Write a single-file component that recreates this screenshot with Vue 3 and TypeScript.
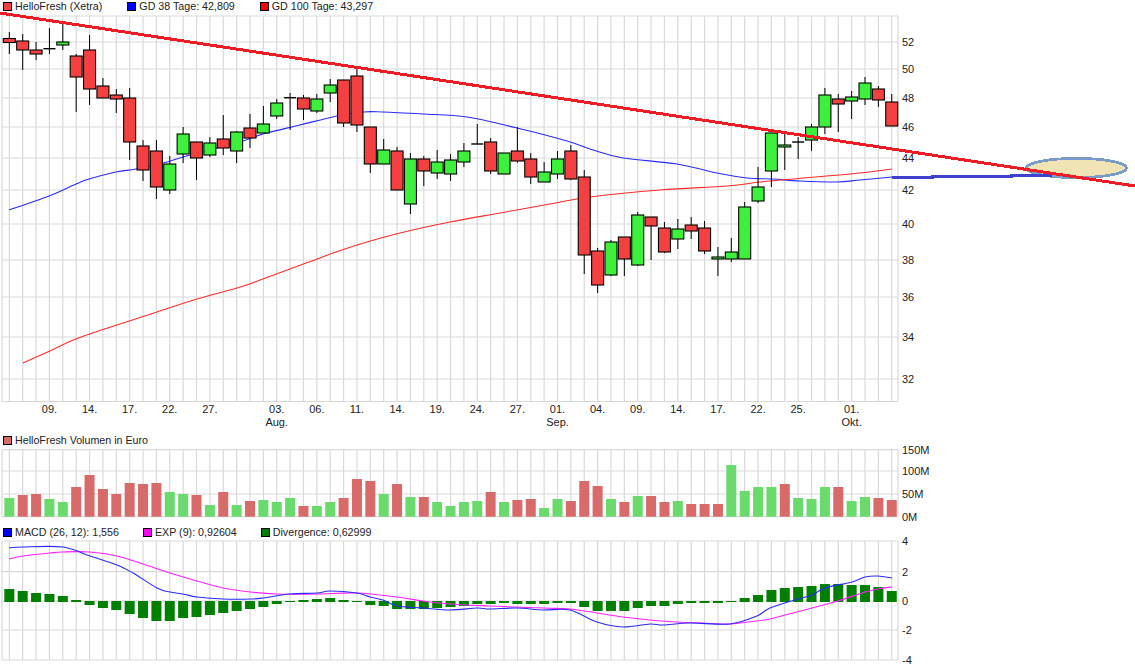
<script setup lang="ts">
// pixel data read off the chart: [bodyTop, bodyBottom, wickTop, wickBottom, up?]
type Candle = [number, number, number, number, number]

const candles: Candle[] = [
  [38.5, 42.5, 32, 54, 0], [41, 50, 34, 70, 0], [50, 54, 42, 60, 0], [48.7, 48.7, 28, 54, 2], [42, 45, 23, 50, 1],
  [56, 77, 54, 112, 0], [50, 89, 35, 105, 0], [86, 98, 78, 98, 0], [95, 99, 89, 113, 0], [98, 142, 88, 160, 0],
  [146, 170, 140, 181, 0], [151, 187, 140, 199, 0], [164, 190, 156, 194, 1], [134, 154, 127, 163, 1], [142, 158, 142, 180, 0],
  [143, 155, 137, 157, 1], [139, 148, 115, 155, 0], [132, 151, 131, 163, 1], [128, 138, 114, 148, 0], [124, 133, 106, 133, 1],
  [103, 116, 99, 119, 1], [97.7, 97.7, 93, 130, 2], [98, 109, 95, 120, 0], [99, 111, 94, 113, 1], [85, 93, 79, 102, 1],
  [80, 123, 80, 127, 0], [76, 125, 69, 132, 0], [127, 164, 127, 173, 0], [150, 164, 139, 164, 1], [151, 190, 147, 190, 0],
  [159, 204, 153, 214, 1], [159, 171, 156, 186, 0], [162, 173, 150, 179, 1], [160, 174, 154, 181, 1], [151, 162, 143, 167, 1],
  [144, 144, 124, 144, 2], [142, 171, 138, 174, 0], [153, 174, 153, 174, 1], [151, 161, 127, 163, 0], [159, 177, 153, 184, 0],
  [172, 182, 162, 182, 1], [159, 174, 151, 179, 1], [151, 179, 145, 180, 0], [177, 255, 170, 274, 0], [251, 285, 248, 293, 0],
  [242, 275, 240, 276, 1], [237, 259, 237, 276, 0], [215, 265, 212, 266, 1], [217, 226, 217, 260, 0], [228, 252, 222, 253, 0],
  [229, 239, 219, 249, 1], [225, 231, 217, 239, 0], [228, 251, 221, 254, 0], [257, 259, 247, 276, 1], [252, 259, 238, 262, 1],
  [207, 259, 202, 259, 1], [187, 201, 167, 203, 1], [133, 171, 133, 187, 1], [145, 147, 133, 170, 1], [142, 142, 137, 159, 2],
  [127, 140, 124, 151, 1], [95, 127, 88, 134, 1], [99, 104, 94, 132, 0], [97, 101, 91, 119, 1], [83, 99, 77, 105, 1],
  [89, 100, 86, 107, 0], [102, 126, 94, 126, 0],
]

const xAt = (i: number) => 9.33 + 13.37 * i
const xs = candles.map((_, i) => xAt(i))
const plotL = 2
const plotR = 898

const priceTicks = [
  { y: 42, label: '52' }, { y: 69, label: '50' }, { y: 98, label: '48' }, { y: 127, label: '46' },
  { y: 158, label: '44' }, { y: 190, label: '42' }, { y: 224, label: '40' }, { y: 260, label: '38' },
  { y: 297, label: '36' }, { y: 337, label: '34' }, { y: 379, label: '32' },
]
const dateTicks = [
  { i: 3, d: '09.' }, { i: 6, d: '14.' }, { i: 9, d: '17.' }, { i: 12, d: '22.' }, { i: 15, d: '27.' },
  { i: 20, d: '03.', m: 'Aug.' }, { i: 23, d: '06.' }, { i: 26, d: '11.' }, { i: 29, d: '14.' }, { i: 32, d: '19.' },
  { i: 35, d: '24.' }, { i: 38, d: '27.' }, { i: 41, d: '01.', m: 'Sep.' }, { i: 44, d: '04.' }, { i: 47, d: '09.' },
  { i: 50, d: '14.' }, { i: 53, d: '17.' }, { i: 56, d: '22.' }, { i: 59, d: '25.' }, { i: 63, d: '01.', m: 'Okt.' },
]

// Catmull-Rom through the read-off points, so the averages don't show kinks
function smooth(src: string) {
  const p = src.split(' ').map(s => s.split(',').map(Number))
  let d = `M${p[0][0]},${p[0][1]}`
  for (let i = 0; i < p.length - 1; i++) {
    const a = p[Math.max(i - 1, 0)]
    const b = p[i]
    const c = p[i + 1]
    const e = p[Math.min(i + 2, p.length - 1)]
    const c1x = b[0] + (c[0] - a[0]) / 6
    const c1y = b[1] + (c[1] - a[1]) / 6
    const c2x = c[0] - (e[0] - b[0]) / 6
    const c2y = c[1] - (e[1] - b[1]) / 6
    d += ` C${c1x.toFixed(1)},${c1y.toFixed(1)} ${c2x.toFixed(1)},${c2y.toFixed(1)} ${c[0]},${c[1]}`
  }
  return d
}

const gd38 = smooth('9,210 49,196 76,184 89,179 116,172 136,169 163,163 183,157 210,150 243,141 263,134 300,125 337,116 363,112 383,112 423,114 467,117 517,128 567,141 593,150 623,158 677,164 717,173 747,178 773,179 800,181 837,182 860,180 892,177')
const gd100 = smooth('23,363 50,351 76,339 117,325 157,312 197,299 237,288 263,279 290,269 320,258 333,253 367,242 400,233 450,222 500,213 550,204 590,197 660,190 727,186 760,182 793,179 860,173 892,169')

// Volume: top of each bar, green = up day
const volTops = [498, 495, 494, 499, 502, 487, 475, 489, 494, 483, 484, 483, 492, 494, 495, 505, 492, 505, 501, 500, 502, 498, 506, 506, 502, 498, 479, 481, 494, 484, 497, 497, 502, 506, 502, 501, 492, 502, 500, 499, 508, 499, 501, 481, 486, 499, 502, 496, 496, 502, 501, 504, 504, 504, 465, 491, 487, 487, 484, 498, 499, 487, 487, 501, 497, 498, 500]
const volUp = new Set([0, 3, 4, 12, 13, 15, 17, 19, 20, 21, 23, 24, 28, 30, 32, 33, 34, 35, 37, 40, 41, 45, 47, 50, 54, 55, 56, 57, 59, 60, 61, 63, 64])
const volBottom = 516.7
const volBars = volTops.map((top, i) => ({ x: xAt(i) - 5, y: top, h: volBottom - top, up: volUp.has(i) }))
const volTicks = [
  { y: 449.7, label: '150M' }, { y: 471, label: '100M' }, { y: 494, label: '50M' }, { y: 516.7, label: '0M' },
]

const macdTicks = [
  { y: 541, label: '4' }, { y: 571.7, label: '2' }, { y: 601, label: '0' }, { y: 630, label: '-2' }, { y: 660, label: '-4' },
]
const divEnds = [589, 591, 593, 594, 596, 600, 605, 608, 610, 614, 618, 621, 621, 618, 617, 615, 613, 611, 609, 607, 604, 602, 600, 599, 598, 600, 601, 605, 606, 609, 609, 609, 608, 607, 606, 604, 604, 603, 604, 604, 604, 603, 603, 607, 611, 611, 611, 608, 606, 606, 604, 603, 603, 603, 602, 598, 595, 590, 588, 587, 586, 584, 584, 585, 585, 587, 591]
const divBars = divEnds.map((v, i) => {
  const top = v < 601 ? v : 601
  const bottom = v < 601 ? 602 : v
  return { x: xAt(i) - 5, y: top, h: Math.max(bottom - top, 1) }
})
const macdLine = smooth('9,548 23,547 63,547 90,556 117,565 133,573 157,588 170,592 183,594 197,597 223,599 250,599 263,598 290,594 317,593 330,591 357,593 370,597 383,600 397,606 423,608 450,610 477,608 490,609 517,608 543,610 570,610 597,622 623,627 650,624 663,625 690,623 730,624 757,616 770,608 798,599 812,595 825,588 852,582 865,577 878,576 892,578')
const expLine = smooth('9,559 23,556 50,553 63,552 90,552 117,556 143,564 170,573 197,581 223,588 250,592 277,594 317,594 357,593 397,597 423,601 450,604 490,606 543,608 570,609 597,613 623,617 650,620 677,622 703,623 730,624 757,621 770,619 785,615 812,608 838,601 865,592 878,589 892,587')
</script>

<template>
  <div class="page">
    <div class="legend legend-main">
      <span class="item"><i class="swatch" style="background:#f44040"></i>HelloFresh (Xetra)</span>
      <span class="item"><i class="swatch" style="background:#0000ff"></i>GD 38 Tage: 42,809</span>
      <span class="item"><i class="swatch" style="background:#ff0000"></i>GD 100 Tage: 43,297</span>
    </div>
    <svg class="panel" width="1135" height="422" viewBox="0 12 1135 422">
      <line v-for="x in xs" :key="x" :x1="x" y1="16" :x2="x" y2="401.5" class="grid" />
      <line x1="2" y1="16" x2="2" y2="401.5" class="grid" />
      <line :x1="plotR" y1="16" :x2="plotR" y2="401.5" class="grid" />
      <line :x1="plotL" y1="16" :x2="plotR" y2="16" class="grid" />
      <line :x1="plotL" y1="401.5" :x2="plotR" y2="401.5" class="grid" />
      <line v-for="t in priceTicks" :key="t.y" :x1="plotL" :y1="t.y" :x2="plotR" :y2="t.y" class="grid" />

      <path :d="gd38" class="ma" stroke="#2a2aff" />
      <path :d="gd100" class="ma" stroke="#ff2a2a" />

      <!-- Kerzen -->
      <g v-for="(c, i) in candles" :key="i">
        <line :x1="xs[i]" :y1="c[2]" :x2="xs[i]" :y2="c[3]" class="wick" />
        <line v-if="c[4] === 2" :x1="xs[i] - 6" :y1="c[0]" :x2="xs[i] + 6" :y2="c[0]" class="doji" />
        <rect v-else :x="xs[i] - 6" :y="c[0]" width="12" :height="c[1] - c[0]" class="body" :class="c[4] ? 'up' : 'down'" />
      </g>

      <!-- Trendlinie + Markierung -->
      <ellipse cx="1076.5" cy="168" rx="50" ry="9.6" class="mark" />
      <polyline points="892,177 932,177 932,176.5 1011,176.5 1011,175.5 1052,175.5" class="ext" />
      <line x1="0" y1="13" x2="1135" y2="186" class="trend" />

      <text v-for="t in priceTicks" :key="t.label" x="902" :y="t.y + 4" class="lbl">{{ t.label }}</text>
      <g v-for="t in dateTicks" :key="t.i">
        <text :x="xs[t.i]" y="413" class="lbl mid">{{ t.d }}</text>
        <text v-if="t.m" :x="xs[t.i]" y="426" class="lbl mid">{{ t.m }}</text>
      </g>
    </svg>

    <div class="legend legend-vol">
      <span class="item"><i class="swatch" style="background:#d96a6a"></i>HelloFresh Volumen in Euro</span>
    </div>
    <svg class="panel" width="1135" height="81" viewBox="0 445 1135 81">
      <line v-for="x in xs" :key="x" :x1="x" y1="449.7" :x2="x" y2="516.7" class="grid" />
      <line x1="2" y1="449.7" x2="2" y2="516.7" class="grid" />
      <line :x1="plotR" y1="449.7" :x2="plotR" y2="516.7" class="grid" />
      <line v-for="t in volTicks" :key="t.y" :x1="plotL" :y1="t.y" :x2="plotR" :y2="t.y" class="grid" />
      <rect v-for="(b, i) in volBars" :key="i" :x="b.x" :y="b.y" width="10" :height="b.h" :fill="b.up ? '#6ada6d' : '#d96a6a'" />
      <text v-for="t in volTicks" :key="t.label" x="902" :y="t.y + 4" class="lbl">{{ t.label }}</text>
    </svg>

    <div class="legend legend-macd">
      <span class="item"><i class="swatch" style="background:#0000ff"></i>MACD (26, 12): 1,556</span>
      <span class="item"><i class="swatch" style="background:#ff00ff"></i>EXP (9): 0,92604</span>
      <span class="item"><i class="swatch" style="background:#007f00"></i>Divergence: 0,62999</span>
    </div>
    <svg class="panel" width="1135" height="131" viewBox="0 536 1135 131">
      <line v-for="x in xs" :key="x" :x1="x" y1="541" :x2="x" y2="660" class="grid" />
      <line x1="2" y1="541" x2="2" y2="660" class="grid" />
      <line :x1="plotR" y1="541" :x2="plotR" y2="660" class="grid" />
      <line v-for="t in macdTicks" :key="t.y" :x1="plotL" :y1="t.y" :x2="plotR" :y2="t.y" class="grid" />
      <rect v-for="(b, i) in divBars" :key="i" :x="b.x" :y="b.y" width="10" :height="b.h" fill="#007f00" />
      <path :d="expLine" class="ma" stroke="#ff20ff" />
      <path :d="macdLine" class="ma" stroke="#2a2aff" />
      <text v-for="t in macdTicks" :key="t.label" x="902" :y="t.y + 4" class="lbl">{{ t.label }}</text>
    </svg>
  </div>
</template>

<style scoped>
.page { width: 1135px; height: 670px; background: #fff; overflow: hidden; display: flex; flex-direction: column; font-family: "Liberation Sans", Arial, sans-serif; color: #222; }
.panel { display: block; flex-shrink: 0; }
.legend { display: flex; gap: 24px; padding-left: 3px; font-size: 10.7px; line-height: 12px; flex-shrink: 0; }
.legend-main { height: 12px; gap: 25px; }
.legend-vol { height: 11px; }
.legend-macd { height: 10px; }
.item { display: flex; align-items: center; height: 12px; white-space: nowrap; }
.swatch { width: 7px; height: 7px; border: 1px solid #000; box-sizing: content-box; margin-right: 3px; }
.grid { stroke: #d9d9d9; stroke-width: 1.2; }
.ma { fill: none; stroke-width: 1.1; stroke-linejoin: round; }
.wick { stroke: #000; stroke-width: 1; }
.doji { stroke: #000; stroke-width: 1.4; }
.body { stroke: #000; stroke-width: 1.1; }
.up { fill: #3cf03c; }
.down { fill: #f44040; }
.ext { fill: none; stroke: #4040d0; stroke-width: 3; shape-rendering: crispEdges; }
.mark { fill: #f0e4b4; stroke: #7a9ac8; stroke-width: 2.8; shape-rendering: crispEdges; }
.trend { stroke: #ee1c25; stroke-width: 3; shape-rendering: crispEdges; }
.lbl { font-size: 11px; fill: #222; }
.mid { text-anchor: middle; }
</style>
